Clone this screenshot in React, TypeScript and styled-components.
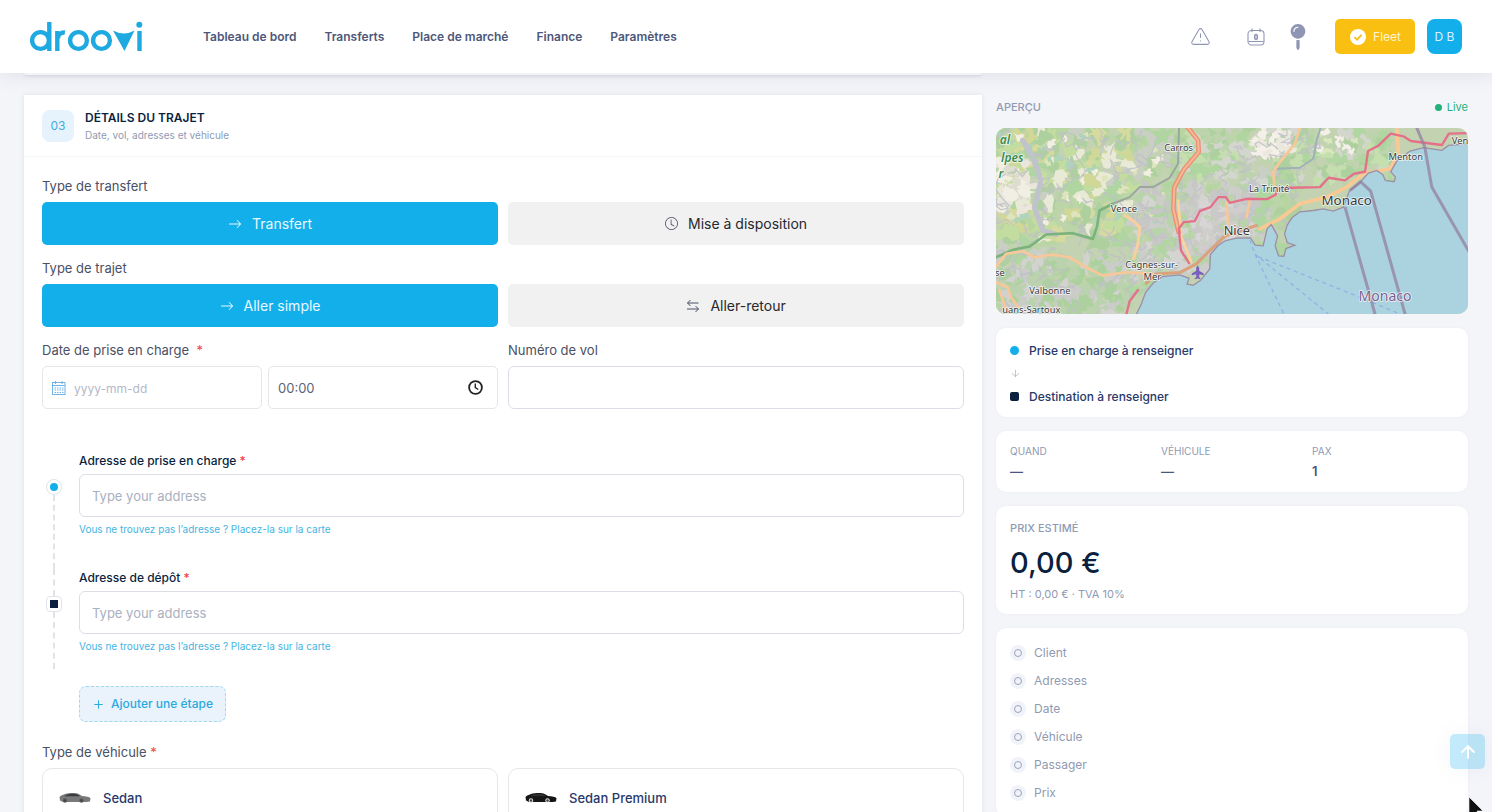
import React from 'react';
import styled, { createGlobalStyle, css } from 'styled-components';
import { TriangleAlert, Plus, ArrowUp, ArrowDown } from 'lucide-react';
import { FaMapPin } from 'react-icons/fa';
import { BsArrowRight, BsClock } from 'react-icons/bs';

const color = {
  blue: '#12afeb',
  navy: '#0b1f3f',
  indigo: '#28396a',
  text: '#4a5065',
  muted: '#8f9ab3',
  line: '#e6e7eb',
  page: '#f4f5f9',
  red: '#f0444b',
};

const GlobalStyle = createGlobalStyle`
  *, *::before, *::after { box-sizing: border-box; }
  body {
    margin: 0;
    background: ${color.page};
    color: ${color.text};
    font-family: Inter, "Liberation Sans", sans-serif;
    font-size: 13px;
    line-height: 18px;
  }
  button, input { font: inherit; color: inherit; }
  h2, p, ul { margin: 0; padding: 0; }
`;

const Shell = styled.div`
  display: flex;
  flex-direction: column;
  height: 100vh;
  position: relative;
  overflow: hidden;
`;

/* ---------- Top bar ---------- */

const TopBar = styled.header`
  display: flex;
  align-items: center;
  flex: none;
  padding: 18px 30px;
  background: #fff;
  box-shadow: 0 2px 18px rgba(60, 70, 110, 0.12);
  z-index: 2;
`;

const LogoLink = styled.a`
  display: block;
  width: 113px;
  height: 37px;
  svg { display: block; }
`;

const Nav = styled.nav`
  display: flex;
  gap: 28px;
  margin-left: 60px;
  flex: 1;
`;

const NavLink = styled.a`
  color: #4d5879;
  font-size: 12px;
  font-weight: 600;
  text-decoration: none;
  white-space: nowrap;
`;

const Tools = styled.div`
  display: flex;
  align-items: center;
`;

const IconButton = styled.button<{ $gap: number }>`
  display: flex;
  padding: 0;
  margin-right: ${(p) => p.$gap}px;
  border: 0;
  background: none;
  color: #8f96b3;
`;

const FleetButton = styled.button`
  display: flex;
  align-items: center;
  gap: 7px;
  height: 35px;
  padding: 0 14px 0 15px;
  border: 0;
  border-radius: 5px;
  background: #f9bf11;
  color: #fff5d6;
  font-size: 12px;
`;

const Avatar = styled.button`
  width: 35px;
  height: 35px;
  margin-left: 12px;
  padding: 0;
  border: 0;
  border-radius: 8px;
  background: ${color.blue};
  color: #d9f3ff;
  font-size: 12px;
`;

/* ---------- Page columns ---------- */

const Page = styled.main`
  flex: 1;
  min-height: 0;
  overflow-y: auto;
  scrollbar-width: none;
  display: grid;
  grid-template-columns: minmax(0, 67fr) minmax(0, 33fr);
  gap: 14px;
  padding: 0 24px;
  align-items: start;
`;

const PreviousCard = styled.div`
  height: 2px;
  margin-bottom: 20px;
  background: #fff;
  border-radius: 0 0 8px 8px;
  box-shadow: 0 1px 3px rgba(40, 50, 80, 0.15);
`;

const FormCard = styled.section`
  background: #fff;
  box-shadow: 0 0 5px rgba(50, 60, 100, 0.1);
`;

const CardHead = styled.div`
  display: flex;
  align-items: center;
  gap: 11px;
  padding: 13px 18px;
  border-bottom: 1px solid #f5f6f8;
`;

const Step = styled.span`
  display: grid;
  place-items: center;
  width: 32px;
  height: 32px;
  border-radius: 8px;
  background: #e6f3fc;
  color: #3cade3;
  font-size: 12px;
`;

const CardTitle = styled.h2`
  color: ${color.navy};
  font-size: 12px;
  font-weight: 600;
  line-height: 20px;
`;

const CardSub = styled.p`
  color: ${color.muted};
  font-size: 10px;
  line-height: 15px;
`;

const FormBody = styled.form`
  padding: 20px 18px 24px;
`;

const TwoCols = styled.div`
  display: grid;
  grid-template-columns: repeat(2, minmax(0, 1fr));
  gap: 10px;
`;

const labelText = css`
  display: block;
  margin-bottom: 7px;
  color: ${color.text};
  font-size: 13px;
  line-height: 18px;
`;

const FieldLabel = styled.label`
  ${labelText}
`;

const FieldCaption = styled.div`
  ${labelText}
`;

const Star = styled.span`
  color: ${color.red};
`;

const ChoiceRow = styled(TwoCols)`
  margin-bottom: 14px;
`;

const Choice = styled.button<{ $active?: boolean }>`
  display: flex;
  align-items: center;
  justify-content: center;
  gap: 10px;
  height: 43px;
  border: 0;
  border-radius: 5px;
  background: ${(p) => (p.$active ? color.blue : '#f1f1f1')};
  color: ${(p) => (p.$active ? '#e8f8ff' : '#26282e')};
  font-size: 14px;
`;

const DateTime = styled.div`
  display: grid;
  grid-template-columns: minmax(0, 220fr) minmax(0, 230fr);
  gap: 6px;
`;

const Box = styled.div`
  display: flex;
  align-items: center;
  gap: 8px;
  height: 43px;
  padding: 0 14px 0 9px;
  border: 1px solid ${color.line};
  border-radius: 5px;
  background: #fff;
`;

const BareInput = styled.input`
  flex: 1;
  min-width: 0;
  padding: 0;
  border: 0;
  outline: 0;
  background: none;
  color: #5c6478;
  font-size: 13px;
  &::placeholder { color: #b4b9c6; font-size: 12px; opacity: 1; }
`;

const TextInput = styled.input`
  display: block;
  width: 100%;
  height: 43px;
  padding: 0 12px;
  border: 1px solid #dcdee6;
  border-radius: 6px;
  outline: 0;
  background: #fff;
  font-size: 13px;
  &::placeholder { color: #a9b0c0; opacity: 1; }
`;

/* ---------- Itinerary ---------- */

const Stops = styled.div`
  margin-top: 43px;
`;

const Stop = styled.div`
  display: grid;
  grid-template-columns: 24px minmax(0, 1fr);
  gap: 13px;
`;

const Track = styled.div<{ $first?: boolean }>`
  display: flex;
  flex-direction: column;
  align-items: center;
  &::before {
    content: '';
    height: 27px;
    border-left: 2px dashed ${(p) => (p.$first ? 'transparent' : '#e1e3e8')};
  }
  &::after {
    content: '';
    flex: 1;
    border-left: 2px dashed #e1e3e8;
  }
`;

const Marker = styled.span<{ $round?: boolean }>`
  display: grid;
  place-items: center;
  width: 16px;
  height: 16px;
  border: 1px solid #dfe3ea;
  border-radius: ${(p) => (p.$round ? '50%' : '4px')};
  &::before {
    content: '';
    width: 8px;
    height: 8px;
    border-radius: ${(p) => (p.$round ? '50%' : '0')};
    background: ${(p) => (p.$round ? color.blue : color.navy)};
  }
`;

const StopBody = styled.div<{ $first?: boolean }>`
  padding-bottom: ${(p) => (p.$first ? '31px' : '14px')};
`;

const StopLabel = styled.label`
  display: block;
  margin-bottom: 4px;
  color: ${color.navy};
  font-size: 12px;
  font-weight: 500;
  line-height: 18px;
`;

const MapLink = styled.a`
  display: inline-block;
  margin-top: 3px;
  color: #45b4e3;
  font-size: 10px;
  line-height: 18px;
  text-decoration: none;
`;

const AddStop = styled.button`
  display: flex;
  align-items: center;
  gap: 6px;
  height: 36px;
  margin: 17px 0 21px 37px;
  padding: 0 12px;
  border: 1px dashed #9fd8f2;
  border-radius: 7px;
  background: #eaf3fb;
  color: #2aa9df;
  font-size: 12px;
  font-weight: 500;
`;

const Vehicle = styled.button`
  display: flex;
  align-items: center;
  gap: 12px;
  height: 76px;
  padding: 0 16px 16px;
  border: 1px solid ${color.line};
  border-radius: 10px;
  background: #fff;
  color: ${color.indigo};
  font-size: 13px;
  font-weight: 500;
`;

/* ---------- Preview column ---------- */

const Aside = styled.aside`
  display: flex;
  flex-direction: column;
  gap: 14px;
  padding-top: 25px;
`;

const AsideHead = styled.div`
  display: flex;
  justify-content: space-between;
  margin-bottom: -3px;
  font-size: 11px;
  line-height: 19px;
  color: ${color.muted};
  font-weight: 500;
`;

const Live = styled.span`
  display: flex;
  align-items: center;
  gap: 5px;
  color: #22b07d;
  font-weight: 400;
  &::before {
    content: '';
    width: 7px;
    height: 7px;
    border-radius: 50%;
    background: currentColor;
  }
`;

const MapFrame = styled.div`
  height: 186px;
  overflow: hidden;
  border-radius: 10px;
  svg { display: block; width: 100%; height: 100%; }
`;

const Panel = styled.section`
  padding: 14px 14px 12px;
  border-radius: 10px;
  background: #fff;
  box-shadow: 0 0 3px rgba(60, 70, 110, 0.05);
`;

const RouteLine = styled.div`
  display: flex;
  align-items: center;
  gap: 10px;
  color: ${color.indigo};
  font-size: 12px;
  font-weight: 500;
  line-height: 17px;
`;

const Dot = styled.span<{ $square?: boolean }>`
  width: 9px;
  height: 9px;
  border-radius: ${(p) => (p.$square ? '2px' : '50%')};
  background: ${(p) => (p.$square ? color.navy : color.blue)};
`;

const Down = styled.div`
  display: flex;
  padding: 9px 0;
  color: #b9bfcc;
`;

const Stats = styled(Panel)`
  display: grid;
  grid-template-columns: repeat(3, minmax(0, 137px));
  gap: 14px;
  padding: 12px 14px;
`;

const Caption = styled.div`
  color: ${color.muted};
  font-size: 10px;
  line-height: 16px;
`;

const StatValue = styled.div`
  margin-top: 3px;
  color: #48577f;
  font-size: 13px;
  font-weight: 600;
  line-height: 18px;
`;

const PriceCaption = styled(Caption)`
  font-size: 11px;
  font-weight: 500;
`;

const Price = styled.div`
  margin: 10px 0 6px;
  color: ${color.navy};
  font-size: 29px;
  font-weight: 500;
  line-height: 34px;
`;

const PriceNote = styled.div`
  color: ${color.muted};
  font-size: 11px;
  line-height: 16px;
`;

const Checks = styled.ul`
  && { padding: 2px 0; }
  display: flex;
  flex-direction: column;
  gap: 10px;
  list-style: none;
`;

const Check = styled.li`
  display: flex;
  align-items: center;
  gap: 8px;
  color: ${color.muted};
  font-size: 12px;
  line-height: 18px;
`;

const Ring = styled.span`
  display: grid;
  place-items: center;
  width: 16px;
  height: 16px;
  border-radius: 50%;
  background: #f1f3f8;
  &::before {
    content: '';
    width: 8px;
    height: 8px;
    border: 1px solid #9aa3bf;
    border-radius: 50%;
  }
`;

const ToTop = styled.button`
  position: absolute;
  right: 7px;
  bottom: 43px;
  z-index: 3;
  display: grid;
  place-items: center;
  width: 35px;
  height: 35px;
  padding: 0;
  border: 0;
  border-radius: 5px;
  background: rgba(18, 175, 235, 0.26);
  color: #fff;
  box-shadow: 0 0 20px rgba(120, 130, 190, 0.08);
`;

const Pointer = styled.svg`
  position: absolute;
  right: 8px;
  bottom: -8px;
  z-index: 4;
`;

/* ---------- Drawings ---------- */

const Logo = () => (
  <svg width="113" height="37" viewBox="0 0 113 37" fill="none" stroke="#1fa9e1" strokeWidth="4.4">
    <circle cx="10.5" cy="22.5" r="8.4" />
    <line x1="19.3" y1="4" x2="19.3" y2="33" />
    <line x1="27.3" y1="13" x2="27.3" y2="33" />
    <circle cx="34" cy="20.5" r="6" strokeDasharray="10 28" strokeDashoffset="-18.5" />
    <circle cx="48.5" cy="22.5" r="8.4" />
    <circle cx="71.5" cy="22.5" r="8.4" />
    <path d="M83 12.5 Q94 18.500 104.500 12.5 L94.5 33 Z" fill="#1fa9e1" stroke="none" />
    <line x1="109.5" y1="13" x2="109.5" y2="33" />
    <circle cx="109.3" cy="6.7" r="3" fill="#1fa9e1" stroke="none" />
  </svg>
);

const DayIcon = () => (
  <svg width="18" height="18" viewBox="0 0 18 18" fill="none" stroke="currentColor" strokeWidth="1.1">
    <rect x="1" y="2.5" width="16" height="14.5" rx="3.5" />
    <path d="M5 0.5v3.5M13 0.5v3.5M1.5 13.5h15" />
    <ellipse cx="9" cy="9" rx="1.6" ry="2.6" />
    <path d="M9 7v4" />
  </svg>
);

const CheckBadge = () => (
  <svg width="16" height="16" viewBox="0 0 16 16">
    <circle cx="8" cy="8" r="8" fill="#fff" />
    <path d="M4.5 8.2 7 10.6 11.5 5.8" fill="none" stroke="#f9bf11" strokeWidth="1.8" />
  </svg>
);

const SwapIcon = () => (
  <svg width="14" height="14" viewBox="0 0 14 14" fill="none" stroke="#4a5065" strokeWidth="1">
    <path d="M12.500 4H1.5M4.5 1 1.5 4l3 3M1 10h11.5M9.5 7l3 3-3 3" />
  </svg>
);

const CalendarIcon = () => (
  <svg width="14" height="14" viewBox="0 0 14 14" fill="none" stroke="#6fb3e6" strokeWidth="1">
    <rect x="0.5" y="1.5" width="12.5" height="12" />
    <path d="M0.5 4.5h12.5M3.5 0v3M10 0v3" />
    <path d="M2.5 7h9M2.5 9h9M2.5 11.5h9" strokeDasharray="1.5 1" />
  </svg>
);

const ClockIcon = () => (
  <svg width="15" height="15" viewBox="0 0 15 15" fill="none" stroke="#222" strokeWidth="1.8">
    <circle cx="7.5" cy="7.5" r="6.4" />
    <path d="M7.3 3.5v4.2l3 1.8" strokeWidth="1.4" />
  </svg>
);

const Car = ({ body, shade, wheel }: { body: string; shade: string; wheel: string }) => (
  <svg width="32" height="12" viewBox="0 0 32 12">
    <path d="M0.5 5C3 2.5 8 1 14 1c5 0 7 1.5 9 3 4 0.2 7.5 0.8 8.5 2.2L31 9.5 28 10H4L1 8.5Z" fill={body} />
    <path d="M5 4.2C8 2.2 11 1.7 14 1.7c4 0 5.5 1 7 2.5Z" fill={shade} />
    <circle cx="6" cy="8.5" r="2.2" fill={wheel} />
    <circle cx="22.5" cy="8.5" r="2.2" fill={wheel} />
    <circle cx="6" cy="8.5" r="1.3" fill="#444" />
    <circle cx="22.5" cy="8.5" r="1.3" fill="#444" />
  </svg>
);

/* Terrain patches are scattered by a small seeded generator so that they stay put. */
const seeded = (seed: number) => () => {
  seed = (seed * 16807) % 2147483647;
  return seed / 2147483647;
};

type Zone = { x: number; y: number; w: number; h: number; n: number; size: number; fills: string[] };

const zones: Zone[] = [
  { x: 40, y: 100, w: 900, h: 580, n: 260, size: 40, fills: ['#add19e', '#bdd5a8', '#b7d5a2', '#c9cfc4', '#b0d6a2'] },
  { x: 60, y: 120, w: 400, h: 320, n: 110, size: 28, fills: ['#d2d797', '#d8da9f', '#add19e', '#e9ead6', '#c3dc9f'] },
  { x: 50, y: 210, w: 100, h: 160, n: 40, size: 22, fills: ['#f1eee4', '#eae6dc', '#dcdccf'] },
  { x: 60, y: 130, w: 540, h: 270, n: 50, size: 14, fills: ['#f2efe2', '#dfe5bc', '#b0d4bc'] },
  { x: 600, y: 110, w: 640, h: 170, n: 160, size: 24, fills: ['#add19e', '#bdd3ac', '#d3d6cc', '#b0d6a2', '#c5dfae'] },
  { x: 820, y: 120, w: 110, h: 80, n: 30, size: 18, fills: ['#f4f0e9', '#ece8df'] },
  { x: 1010, y: 125, w: 120, h: 60, n: 14, size: 14, fills: ['#f4f0e9', '#d9e8bd'] },
  { x: 460, y: 280, w: 360, h: 260, n: 170, size: 22, fills: ['#cdcdcb', '#c7c7c6', '#b9d3ab', '#d4d4d2'] },
  { x: 50, y: 500, w: 420, h: 180, n: 120, size: 24, fills: ['#cbccc9', '#bad2ad', '#add19e', '#d2d2d0'] },
  { x: 640, y: 340, w: 150, h: 150, n: 50, size: 20, fills: ['#d0cdcc', '#cac8c8', '#d8d5d5'] },
];

const patches = (() => {
  const rnd = seeded(4211);
  const out: { d: string; fill: string }[] = [];
  zones.forEach((z) => {
    for (let i = 0; i < z.n; i += 1) {
      const cx = z.x + rnd() * z.w;
      const cy = z.y + rnd() * z.h;
      const stretch = 0.5 + rnd();
      const pts: string[] = [];
      for (let k = 0; k < 11; k += 1) {
        const a = (k / 11) * Math.PI * 2;
        const r = z.size * (0.25 + rnd() * 0.9);
        pts.push(`${Math.round(cx + Math.cos(a) * r * stretch)} ${Math.round(cy + Math.sin(a) * r)}`);
      }
      out.push({ d: `M${pts.join('L')}Z`, fill: z.fills[Math.floor(rnd() * z.fills.length)] });
    }
  });
  return out;
})();

const lanes = (() => {
  const rnd = seeded(977);
  const out: string[] = [];
  for (let i = 0; i < 130; i += 1) {
    let x = 50 + rnd() * 950;
    let y = 110 + rnd() * 550;
    let d = `M${Math.round(x)} ${Math.round(y)}`;
    for (let k = 0; k < 6; k += 1) {
      x += (rnd() - 0.5) * 50;
      y += (rnd() - 0.4) * 40;
      d += `L${Math.round(x)} ${Math.round(y)}`;
    }
    out.push(d);
  }
  return out;
})();

const coast =
  'M470 672L485 640 498 605 520 578 548 558 600 553 628 563 622 580 640 584 662 570 690 535 692 492 715 465 738 450 770 443 812 442 826 464 850 466 856 440 862 415 874 402 882 416 893 436 886 466 896 496 912 497 918 474 945 464 922 456 914 430 922 404 936 382 960 364 1000 360 1030 355 1060 362 1090 350 1108 302 1140 276 1165 248 1190 240 1208 252 1216 270 1242 274 1246 260 1232 244 1250 212 1290 182 1330 172 1385 180 1405 165 1470 160 1470 672Z';

type Place = { x: number; y: number; size: number; label: string; anchor?: 'end' | 'middle' };

const places: Place[] = [
  { x: 597, y: 182, size: 28, label: 'Carros', anchor: 'middle' },
  { x: 433, y: 366, size: 28, label: 'Vence', anchor: 'middle' },
  { x: 868, y: 305, size: 28, label: 'La Trinité', anchor: 'middle' },
  { x: 1277, y: 208, size: 28, label: 'Menton', anchor: 'middle' },
  { x: 1415, y: 160, size: 28, label: 'Ven' },
  { x: 516, y: 531, size: 28, label: 'Cagnes-sur-', anchor: 'middle' },
  { x: 518, y: 567, size: 28, label: 'Mer', anchor: 'middle' },
  { x: 211, y: 609, size: 28, label: 'Valbonne', anchor: 'middle' },
  { x: 243, y: 667, size: 28, label: 'uans-Sartoux', anchor: 'end' },
  { x: 76, y: 557, size: 28, label: 'se', anchor: 'end' },
  { x: 1100, y: 343, size: 40, label: 'Monaco', anchor: 'middle' },
  { x: 771, y: 433, size: 38, label: 'Nice', anchor: 'middle' },
];

const CoastMap = () => (
  <svg viewBox="48 113 1417 557" preserveAspectRatio="xMidYMid slice" role="img" aria-label="Nice – Monaco">
    <rect x="40" y="100" width="1440" height="590" fill="#c3d3b2" />
    {patches.map((p, i) => (
      <path key={i} d={p.d} fill={p.fill} />
    ))}
    <g fill="none" stroke="#c0c1c8" strokeWidth="4" opacity="0.85">
      {lanes.map((d, i) => (
        <path key={i} d={d} />
      ))}
    </g>
    <g fill="none" strokeLinejoin="round" strokeLinecap="round">
      <path d="M130 150L160 200 185 270 165 350 190 420 230 432" stroke="#c0c3cb" strokeWidth="16" />
      <path d="M50 500L100 478 150 468 200 432 280 428 340 445 352 410 360 360 400 340" stroke="#7cb37c" strokeWidth="8" />
      <path d="M400 340L450 320 480 290 520 290 570 262 595 220 598 113" stroke="#9aa79f" strokeWidth="6" />
      <path d="M890 235L960 232 1000 205 1010 150 1022 113" stroke="#9fb0b6" strokeWidth="6" />
      <path d="M50 528L80 490 130 482 165 500 220 492 270 500 320 530 370 555 440 545 520 550" stroke="#f7c79a" strokeWidth="8" />
      <path d="M50 575L85 590 95 620 130 668M60 600L85 668" stroke="#f7c79a" strokeWidth="8" />
      <path d="M435 375L460 390 480 410 475 460 462 505" stroke="#f9cf9c" strokeWidth="9" />
      <path d="M740 335L745 400M810 330L800 380M960 113L945 160 900 215 880 245 885 300" stroke="#f7c79a" strokeWidth="8" />
      <path d="M840 415L900 385 960 340 1040 320 1100 290 1150 250 1230 235 1255 190 1250 113" stroke="#f9c893" strokeWidth="11" />
      <path d="M500 578L530 550 600 546 650 520 690 480 735 437 830 405" stroke="#d9a27d" strokeWidth="9" />
      <path d="M595 330L605 440 635 515" stroke="#fbd39b" strokeWidth="8" />
      <path d="M615 100L655 150 657 185 612 238 584 290 581 355 597 425" stroke="#ea8f72" strokeWidth="14" />
      <path d="M615 100L655 150 657 185 612 238 584 290 581 355 597 425" stroke="#f7b896" strokeWidth="6" />
      <path d="M440 672L450 632 475 598M628 518L604 480 597 415 612 395 645 392 660 362 692 350 716 320 738 320 750 337 800 325 862 326 888 312 890 295 930 292 1020 290 1046 262 1095 270 1122 250 1155 244 1164 182 1195 166 1232 130 1270 138 1292 152 1385 164 1406 130 1470 128" stroke="#e4708a" strokeWidth="7" />
    </g>
    <path d={coast} fill="#aad3df" stroke="#9c8fa8" strokeWidth="4" />
    <g fill="none" stroke="#8fb3e2" strokeWidth="4" strokeDasharray="12 11">
      <path d="M810 448L825 490 912 670M825 490L1045 670M835 498L1120 612 1260 670" />
    </g>
    <g fill="none" stroke="#93809f" strokeWidth="9" opacity="0.75" strokeLinejoin="round">
      <path d="M1308 108L1334 170 1355 290 1470 490M1095 350L1186 674M1110 300L1142 274 1172 302 1276 674" />
    </g>
    <path d="M653 525l5 6 1 10 13 8v5l-13-3-1 8 4 4v3l-8-2-9 2v-3l5-4-1-8-13 3v-5l13-8 1-10Z" fill="#7a5fc0" />
    <g fontFamily="Noto Sans, sans-serif" stroke="#ffffff" strokeOpacity="0.75" strokeWidth="5" paintOrder="stroke" strokeLinejoin="round">
      {places.map((p) => (
        <text key={p.label} x={p.x} y={p.y} fontSize={p.size} textAnchor={p.anchor} fill="#3a3a3a">
          {p.label}
        </text>
      ))}
      <text x="1215" y="630" fontSize="42" textAnchor="middle" fill="#7d5f8f">Monaco</text>
      <g fill="#3d8a4e" fontStyle="italic" fontWeight="600" fontSize="36">
        <text x="92" y="162" textAnchor="end">al</text>
        <text x="132" y="214" textAnchor="end">lpes</text>
        <text x="72" y="264" textAnchor="end">r</text>
      </g>
    </g>
  </svg>
);

/* ---------- Page ---------- */

const navItems = ['Tableau de bord', 'Transferts', 'Place de marché', 'Finance', 'Paramètres'];
const stats = [
  ['QUAND', '—'],
  ['VÉHICULE', '—'],
  ['PAX', '1'],
];
const checks = ['Client', 'Adresses', 'Date', 'Véhicule', 'Passager', 'Prix'];

const AddressStop = ({ id, label, first }: { id: string; label: string; first?: boolean }) => (
  <Stop>
    <Track $first={first}>
      <Marker $round={first} />
    </Track>
    <StopBody $first={first}>
      <StopLabel htmlFor={id}>
        {label} <Star>*</Star>
      </StopLabel>
      <TextInput id={id} type="text" placeholder="Type your address" />
      <MapLink href="#carte">Vous ne trouvez pas l’adresse ? Placez-la sur la carte</MapLink>
    </StopBody>
  </Stop>
);

export default function App() {
  return (
    <Shell>
      <GlobalStyle />
      <TopBar>
        <LogoLink href="#accueil" aria-label="droovi">
          <Logo />
        </LogoLink>
        <Nav>
          {navItems.map((item) => (
            <NavLink key={item} href="#menu">{item}</NavLink>
          ))}
        </Nav>
        <Tools>
          <IconButton $gap={36} type="button" aria-label="Alertes">
            <TriangleAlert size={21} strokeWidth={1.2} />
          </IconButton>
          <IconButton $gap={20} type="button" aria-label="Agenda">
            <DayIcon />
          </IconButton>
          <IconButton $gap={24} type="button" aria-label="Carte">
            <FaMapPin size={26} />
          </IconButton>
          <FleetButton type="button">
            <CheckBadge />
            Fleet
          </FleetButton>
          <Avatar type="button">D B</Avatar>
        </Tools>
      </TopBar>

      <Page>
        <div>
          <PreviousCard />
          <FormCard>
            <CardHead>
              <Step>03</Step>
              <div>
                <CardTitle>DÉTAILS DU TRAJET</CardTitle>
                <CardSub>Date, vol, adresses et véhicule</CardSub>
              </div>
            </CardHead>
            <FormBody>
              <FieldCaption>Type de transfert</FieldCaption>
              <ChoiceRow>
                <Choice type="button" $active>
                  <BsArrowRight size={14} />
                  Transfert
                </Choice>
                <Choice type="button">
                  <BsClock size={13} color="#4a5065" />
                  Mise à disposition
                </Choice>
              </ChoiceRow>
              <FieldCaption>Type de trajet</FieldCaption>
              <ChoiceRow>
                <Choice type="button" $active>
                  <BsArrowRight size={14} />
                  Aller simple
                </Choice>
                <Choice type="button">
                  <SwapIcon />
                  Aller-retour
                </Choice>
              </ChoiceRow>
              <TwoCols>
                <div>
                  <FieldLabel htmlFor="date">
                    Date de prise en charge &nbsp;<Star>*</Star>
                  </FieldLabel>
                  <DateTime>
                    <Box>
                      <CalendarIcon />
                      <BareInput id="date" type="text" placeholder="yyyy-mm-dd" />
                    </Box>
                    <Box>
                      <BareInput type="text" defaultValue="00:00" aria-label="Heure" />
                      <ClockIcon />
                    </Box>
                  </DateTime>
                </div>
                <div>
                  <FieldLabel htmlFor="vol">Numéro de vol</FieldLabel>
                  <TextInput id="vol" type="text" />
                </div>
              </TwoCols>
              <Stops>
                <AddressStop id="pickup" label="Adresse de prise en charge" first />
                <AddressStop id="dropoff" label="Adresse de dépôt" />
              </Stops>
              <AddStop type="button">
                <Plus size={13} strokeWidth={1.8} />
                Ajouter une étape
              </AddStop>
              <FieldCaption>
                Type de véhicule <Star>*</Star>
              </FieldCaption>
              <TwoCols>
                <Vehicle type="button">
                  <Car body="#77797b" shade="#3c3d3f" wheel="#5e6062" />
                  Sedan
                </Vehicle>
                <Vehicle type="button">
                  <Car body="#151515" shade="#2d2d2d" wheel="#e6e6e6" />
                  Sedan Premium
                </Vehicle>
              </TwoCols>
            </FormBody>
          </FormCard>
        </div>

        <Aside>
          <AsideHead>
            <span>APERÇU</span>
            <Live>Live</Live>
          </AsideHead>
          <MapFrame>
            <CoastMap />
          </MapFrame>
          <Panel>
            <RouteLine>
              <Dot />
              Prise en charge à renseigner
            </RouteLine>
            <Down>
              <ArrowDown size={11} />
            </Down>
            <RouteLine>
              <Dot $square />
              Destination à renseigner
            </RouteLine>
          </Panel>
          <Stats>
            {stats.map(([label, value]) => (
              <div key={label}>
                <Caption>{label}</Caption>
                <StatValue>{value}</StatValue>
              </div>
            ))}
          </Stats>
          <Panel>
            <PriceCaption>PRIX ESTIMÉ</PriceCaption>
            <Price>0,00 €</Price>
            <PriceNote>HT : 0,00 € · TVA 10%</PriceNote>
          </Panel>
          <Panel>
            <Checks>
              {checks.map((c) => (
                <Check key={c}>
                  <Ring />
                  {c}
                </Check>
              ))}
            </Checks>
          </Panel>
        </Aside>
      </Page>

      <ToTop type="button" aria-label="Haut de page">
        <ArrowUp size={20} strokeWidth={2.4} />
      </ToTop>
      <Pointer width="16" height="24" viewBox="0 0 16 24" aria-hidden="true">
        <path d="M1 1v19l5-4 3 7 3-1-3-7h6Z" fill="#111" stroke="#fff" strokeWidth="0.6" />
      </Pointer>
    </Shell>
  );
}
